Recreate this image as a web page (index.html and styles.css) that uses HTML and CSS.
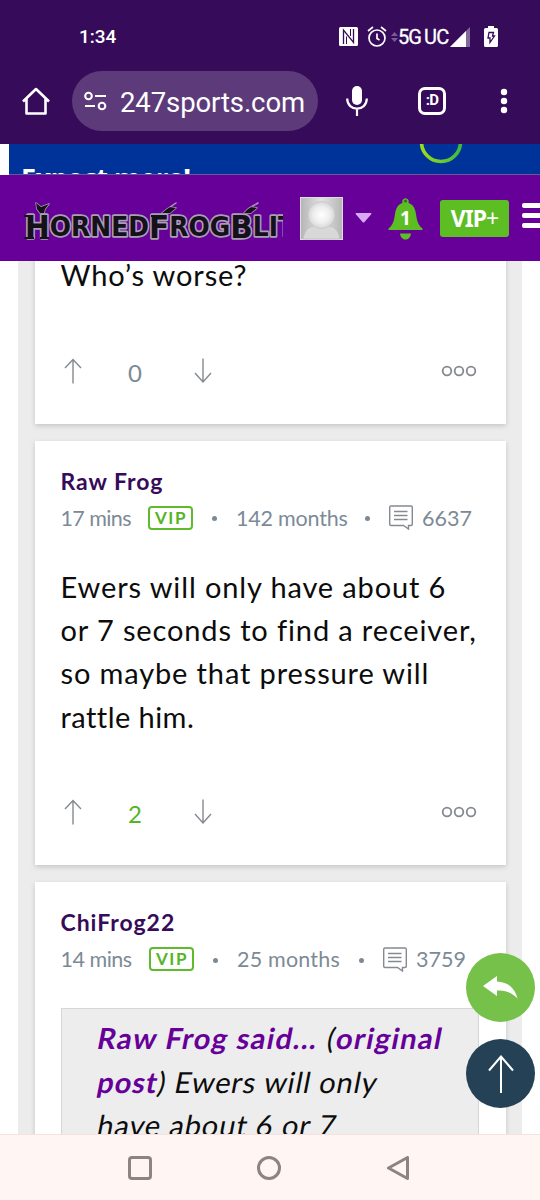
FILE: index.html
```html
<!DOCTYPE html>
<html lang="en">
<head>
    <meta charset="UTF-8">
    <meta name="viewport" content="width=device-width, initial-scale=1.0">
    <title>HornedFrogBlitz</title>

    <link rel="stylesheet" href="styles.css">
</head>
<body>
    <div class="status-bar">
        <span class="clock">1:34</span>
        <svg class="nfc" width="19" height="19" viewBox="0 0 19 19">
            <rect width="19" height="19" rx="1.500" fill="#fff"/>
            <path d="M4.500 17V3L14.500 15.500V2" fill="none" stroke="#360b59" stroke-width="1.300"/>
            <path d="M7.500 17V9.500M11.500 9V2" fill="none" stroke="#360b59" stroke-width="1"/>
        </svg>
        <svg class="alarm" width="20" height="21" viewBox="0 0 20 21" fill="none" stroke="#fff" stroke-width="1.700">
            <circle cx="10" cy="12" r="8"/>
            <path d="M10 7.500V12.500L12.500 14M1 5L6 1M19 5L14 1"/>
        </svg>
        <svg class="data" width="7" height="10" viewBox="0 0 7 10">
            <path d="M0 4L3.500 0L7 4ZM0 6L3.500 10L7 6Z" fill="#7b5b94"/>
        </svg>
        <span class="network"><span>5G</span><span>UC</span></span>
        <svg class="signal" width="20" height="20" viewBox="0 0 20 20">
            <path d="M0 20L20 0V20Z" fill="#81679a"/>
            <path d="M0 20L16 4V20Z" fill="#fff"/>
        </svg>
        <svg class="battery" width="14" height="21" viewBox="0 0 14 21">
            <path d="M1.500 2H4V0H10V2H12.500Q14 2 14 3.500V19.500Q14 21 12.500 21H1.500Q0 21 0 19.500V3.500Q0 2 1.500 2Z" fill="#fff"/>
            <path d="M5 6.500H9.500L8.500 10H10.500L6 16.500V12H4Z" fill="none" stroke="#360b59" stroke-width="1.300"/>
        </svg>
    </div>

    <div class="toolbar">
        <svg class="home" width="28" height="28" viewBox="0 0 28 28" fill="none" stroke="#fff" stroke-width="2.600" stroke-linejoin="round">
            <path d="M1 14.500L14 2L27 14.500M4.500 12V26.500H23.500V12"/>
        </svg>
        <div class="address">
            <svg width="23" height="20" viewBox="0 0 23 20" fill="none" stroke="#fff" stroke-width="2.100">
                <circle cx="4.500" cy="5" r="3.300"/>
                <path d="M11 5H22M1 15H11"/>
                <circle cx="18" cy="15" r="3.300"/>
            </svg>
            <span class="url">247sports.com</span>
        </div>
        <svg class="mic" width="22" height="31" viewBox="0 0 22 31">
            <rect x="6" y="0" width="10" height="19" rx="5" fill="#fff"/>
            <path d="M1.200 12.500C1.200 26 20.800 26 20.800 12.500M11 22.500V30" fill="none" stroke="#fff" stroke-width="2.200"/>
        </svg>
        <div class="tabs">:D</div>
        <svg class="kebab" width="8" height="26" viewBox="0 0 8 26" fill="#fff">
            <circle cx="4" cy="4" r="3.200"/>
            <circle cx="4" cy="13" r="3.200"/>
            <circle cx="4" cy="22" r="3.200"/>
        </svg>
    </div>

    <div class="ad">
        <span class="ad-text">Expect more!</span>
        <svg class="ad-ring" width="44" height="20" viewBox="0 0 44 20">
            <defs>
                <linearGradient id="ring">
                    <stop offset="0" stop-color="#9bdc1c"/>
                    <stop offset="1" stop-color="#3dbb3d"/>
                </linearGradient>
            </defs>
            <circle cx="22" cy="-2" r="19.500" fill="none" stroke="url(#ring)" stroke-width="3.600"/>
        </svg>
    </div>

    <div class="site-header">
        <svg class="logo" width="263" height="50" viewBox="0 0 263 50">
            <g fill="#15101a" stroke="#a99fb4" stroke-width="3.500" stroke-linejoin="round" paint-order="stroke">
                <path d="M16 10L21 14L29 11L25 16L24 20H20L17 16ZM156 10L150 14L156 15L150 20H142L147 16ZM238 10L231 14L237 15L231 20H224L228 16Z" stroke-width="1.500"/>
                <text x="5" y="45" font-size="32" textLength="270" lengthAdjust="spacingAndGlyphs">H<tspan font-size="27" dy="-2">ORNED</tspan><tspan dy="2">F</tspan><tspan font-size="27" dy="-2">ROG</tspan><tspan dy="2">B</tspan><tspan font-size="27" dy="-2">LIT</tspan></text>
                <path d="M4 23H11M4 45H14M20 45H29M131 23H138M214 23H221" fill="none" stroke="#15101a" stroke-width="2"/>
            </g>
        </svg>
        <svg class="avatar" width="43" height="43" viewBox="0 0 43 43">
            <defs>
                <radialGradient id="face">
                    <stop offset="0" stop-color="#fff"/>
                    <stop offset=".6" stop-color="#eee"/>
                    <stop offset="1" stop-color="#d6d6d6"/>
                </radialGradient>
                <linearGradient id="back">
                    <stop offset="0" stop-color="#b5b5b5"/>
                    <stop offset=".5" stop-color="#e2e2e2"/>
                    <stop offset="1" stop-color="#b5b5b5"/>
                </linearGradient>
            </defs>
            <rect x=".5" y=".5" width="42" height="42" fill="url(#back)" stroke="#dedede"/>
            <path d="M3 42C5 31 10 28 21.500 28S38 31 40 42Z" fill="#d8d8d8" stroke="#bbb" stroke-width=".7"/>
            <circle cx="21.500" cy="18" r="13.500" fill="url(#face)" stroke="#c4c4c4" stroke-width=".7"/>
        </svg>
        <svg class="caret" width="17" height="10" viewBox="0 0 17 10">
            <path d="M1 0H16Q17 .5 16 1.500L9.500 9Q8.500 10 7.500 9L1 1.500Q0 .5 1 0Z" fill="#d9a8f5"/>
        </svg>
        <div class="bell">
            <svg width="35" height="43" viewBox="0 0 35 43">
                <path d="M.5 33V31.500C5 28 6 24 7 17C8 10 11 7 14.500 6A3.300 3.300 0 1 1 20.500 6C24 7 27 10 28 17C29 24 30 28 34.500 31.500V33ZM12 36.500H23C22.500 40.500 20 42.500 17.500 42.500S12.500 40.500 12 36.500Z" fill="#5dbe24"/>
                <circle cx="17.500" cy="4" r="1.500" fill="#363"/>
            </svg>
            <span class="bell-count">1</span>
        </div>
        <div class="vip-button">VIP<span>+</span></div>
        <div class="menu"><i></i><i></i><i></i></div>
    </div>

    <div class="content">
        <div class="thread">
            <div class="post first">
                <p class="post-body">Who’s worse?</p>
                <div class="votes">
                    <svg width="18" height="26" viewBox="0 0 18 26"><path d="M9 25.500V1.500M1 10L9 1.500L17 10"/></svg>
                    <span class="score">0</span>
                    <svg width="18" height="26" viewBox="0 0 18 26"><path d="M9 .5V24.500M1 15L9 24L17 15"/></svg>
                    <svg class="more" width="36" height="12" viewBox="0 0 36 12"><circle cx="6" cy="6" r="4.300"/><circle cx="18" cy="6" r="4.300"/><circle cx="30" cy="6" r="4.300"/></svg>
                </div>
            </div>

            <div class="post">
                <div class="author">Raw Frog</div>
                <div class="meta">
                    <span class="mins">17 mins</span>
                    <span class="vip">VIP</span>
                    <i class="dot"></i>
                    <span class="months long">142 months</span>
                    <i class="dot"></i>
                    <svg width="24" height="25" viewBox="0 0 24 25"><path d="M2 1H22Q23.300 1 23.300 2.500V19Q23.300 20.500 22 20.500H19.500V24L14.500 20.500H2Q.7 20.500 .7 19V2.500Q.7 1 2 1ZM5 6.500H18.500M5 10.500H18.500M5 14.500H18.500"/></svg>
                    <span class="count">6637</span>
                </div>
                <p class="post-body">
                    Ewers will only have about 6<br>
                    or 7 seconds to find a receiver,<br>
                    so maybe that pressure will<br>
                    <span class="tight">rattle him.</span>
                </p>
                <div class="votes">
                    <svg width="18" height="26" viewBox="0 0 18 26"><path d="M9 25.500V1.500M1 10L9 1.500L17 10"/></svg>
                    <span class="score up">2</span>
                    <svg width="18" height="26" viewBox="0 0 18 26"><path d="M9 .5V24.500M1 15L9 24L17 15"/></svg>
                    <svg class="more" width="36" height="12" viewBox="0 0 36 12"><circle cx="6" cy="6" r="4.300"/><circle cx="18" cy="6" r="4.300"/><circle cx="30" cy="6" r="4.300"/></svg>
                </div>
            </div>

            <div class="post">
                <div class="author">ChiFrog22</div>
                <div class="meta">
                    <span class="mins late">14 mins</span>
                    <span class="vip">VIP</span>
                    <i class="dot"></i>
                    <span class="months">25 months</span>
                    <i class="dot"></i>
                    <svg width="24" height="25" viewBox="0 0 24 25"><path d="M2 1H22Q23.300 1 23.300 2.500V19Q23.300 20.500 22 20.500H19.500V24L14.500 20.500H2Q.7 20.500 .7 19V2.500Q.7 1 2 1ZM5 6.500H18.500M5 10.500H18.500M5 14.500H18.500"/></svg>
                    <span class="count">3759</span>
                </div>
                <div class="quote">
                    <div class="line source"><b>Raw Frog said...</b> (<b>original</b></div>
                    <div class="line"><b>post</b>) Ewers will only</div>
                    <div class="line">have about 6 or 7</div>
                </div>
            </div>
        </div>
    </div>

    <div class="floating">
        <div class="reply">
            <svg width="35" height="23" viewBox="0 0 35 23"><path d="M0 10L14 0V5.500C25 6 32 12 34.500 22.500C28 16 22 14.500 14 14.500V20Z" fill="#fff"/></svg>
        </div>
        <div class="top">
            <svg width="26" height="38" viewBox="0 0 26 38"><path d="M13 38V1M1 15.500L13 1.500L25 15.500" fill="none" stroke="#fff" stroke-width="2"/></svg>
        </div>
    </div>

    <div class="system-nav">
        <svg width="24" height="24" viewBox="0 0 24 24"><rect x="1.500" y="1.500" width="21" height="21" rx="2.500"/></svg>
        <svg width="24" height="24" viewBox="0 0 24 24"><circle cx="12" cy="12" r="10.500"/></svg>
        <svg width="24" height="24" viewBox="0 0 24 24"><path d="M2.500 12L21.500 1.500V22.500Z"/></svg>
    </div>
</body>
</html>
```

FILE: styles.css
```css
* {
    box-sizing: border-box;
}

body {
    margin: 0;
    width: 540px;
    height: 1200px;
    overflow: hidden;
    display: flex;
    flex-direction: column;
    background: #fff;
    font-family: Lato, sans-serif;
}

svg {
    display: block;
    flex: none;
}

p {
    margin: 0;
}

/* phone status bar */
.status-bar {
    height: 71px;
    padding: 2px 42px 0 79px;
    display: flex;
    align-items: center;
    background: #360b59;
    color: #fff;
    font: 500 19px Roboto, sans-serif;
}

.clock {
    margin-right: auto;
}

.alarm {
    margin-left: 9px;
}

.data {
    margin-left: 4px;
}

.network {
    display: flex;
    gap: 3px;
    width: 51px;
    font-size: 20px;
    font-weight: normal;
    letter-spacing: -.9px;
    -webkit-text-stroke: .3px #fff;
}

.signal {
    margin-left: 1px;
}

.battery {
    margin-left: 14px;
}

/* browser toolbar */
.toolbar {
    height: 73px;
    padding: 0 32px 13px 22px;
    display: flex;
    align-items: center;
    background: #360b59;
    color: #fff;
    font-family: Roboto, sans-serif;
}

.address {
    width: 246px;
    height: 60px;
    margin-left: 22px;
    padding-left: 12px;
    display: flex;
    align-items: center;
    gap: 13px;
    border-radius: 30px;
    background: #5d3b7a;
}

.url {
    padding-top: 2px;
    font-size: 27.5px;
    letter-spacing: -.1px;
}

.mic {
    margin-left: 28px;
}

.tabs {
    width: 28px;
    height: 28px;
    margin-left: 50px;
    border: 3px solid #fff;
    border-radius: 7px;
    font-size: 15px;
    font-weight: bold;
    line-height: 21px;
    letter-spacing: -.7px;
    text-align: center;
}

.kebab {
    margin-left: auto;
}

/* ad peeking out under the toolbar */
.ad {
    height: 31px;
    margin-left: 9px;
    padding-left: 12px;
    display: flex;
    overflow: hidden;
    background: #003399;
    border-bottom: 1px solid #66569a;
    color: #fff;
}

.ad-text {
    width: 398px;
    padding-top: 16.5px;
    font: bold 27px/34px "Open Sans", sans-serif;
    letter-spacing: -.5px;
    white-space: nowrap;
}

/* site header */
.site-header {
    height: 86px;
    padding-left: 20px;
    display: flex;
    align-items: center;
    flex: none;
    overflow: hidden;
    background: #660099;
}

.logo {
    font-family: "DejaVu Sans", sans-serif;
    font-weight: bold;
}

.avatar {
    margin-left: 17px;
}

.caret {
    margin-left: 12px;
}

.bell {
    position: relative;
    margin-left: 16px;
}

.bell-count {
    position: absolute;
    top: 10px;
    left: 0;
    width: 35px;
    text-align: center;
    font: bold 19px/22px "Noto Sans", sans-serif;
    color: #fff;
}

.vip-button {
    width: 69px;
    height: 37px;
    flex: none;
    margin-left: 17px;
    border-radius: 3px;
    background: #5dbe24;
    color: #fff;
    font: bold 23px/36px "Noto Sans", sans-serif;
    letter-spacing: -.9px;
    text-align: center;
}

.vip-button span {
    font-weight: normal;
}

.menu {
    width: 26px;
    margin-top: -6px;
    margin-left: 13px;
    display: flex;
    flex-direction: column;
    gap: 5px;
    flex: none;
}

.menu i {
    height: 5px;
    border-radius: 2px;
    background: #fff;
}

/* posts */
.content {
    height: 873px;
    flex: none;
    overflow: hidden;
    padding: 0 18px 0 17.5px;
}

.thread {
    display: flex;
    flex-direction: column;
    gap: 17px;
    padding: 0 16.5px 0 17px;
    background: #ececec;
}

.post {
    padding: 26px 26.5px 37px 26px;
    background: #fff;
    box-shadow: 0 2px 5px rgba(0, 0, 0, .16);
}

.first {
    margin-top: -34px;
}

.first .post-body {
    margin-top: 0;
}

.author {
    height: 28px;
    line-height: 29px;
    font-size: 23px;
    font-weight: bold;
    letter-spacing: .95px;
    color: #360b59;
}

.meta {
    height: 28px;
    margin-top: 9px;
    display: flex;
    align-items: center;
    font-size: 21.5px;
    line-height: 28px;
    color: #7c8a96;
    white-space: nowrap;
}

.meta svg,
.votes svg {
    fill: none;
    stroke: #858a91;
    stroke-width: 1.4;
}

.mins {
    width: 87.5px;
    letter-spacing: -.6px;
}

.late {
    width: 88.5px;
    letter-spacing: -.5px;
}

.vip {
    width: 45px;
    height: 24px;
    border: 2px solid #5fba2c;
    border-radius: 4px;
    color: #55b524;
    font-size: 17px;
    font-weight: bold;
    line-height: 20px;
    letter-spacing: 1.6px;
    text-align: center;
    text-indent: 1px;
}

.dot {
    width: 5px;
    height: 5px;
    margin: 2px 19px 0;
    border-radius: 50%;
    background: #7c8a96;
}

.months {
    width: 103px;
    letter-spacing: .2px;
}

.long {
    width: 110px;
    letter-spacing: -.2px;
}

.count {
    margin-left: 9px;
}

.post-body {
    margin-top: 33px;
    font-size: 29px;
    line-height: 43.3px;
    letter-spacing: .87px;
    color: #0c0c0c;
    white-space: nowrap;
}

.tight {
    letter-spacing: .45px;
}

.votes {
    height: 32px;
    margin-top: 58.5px;
    margin-left: 3px;
    display: flex;
    align-items: center;
}

.score {
    width: 61px;
    margin: 3px 28px 0 23px;
    text-align: center;
    font-size: 24px;
    color: #7c8a96;
}

.up {
    color: #55b524;
}

.votes .more {
    margin-left: auto;
    margin-right: 2.5px;
    stroke-width: 1.8;
}

.quote {
    width: 418px;
    height: 180px;
    margin-top: 35px;
    padding: 7px 0 0 36.5px;
    border: 1px solid #d6d6d6;
    background: #ededed;
    font-size: 29px;
    line-height: 43.3px;
    letter-spacing: .9px;
    color: #0c0c0c;
    white-space: nowrap;
}

/* slanted roman letters instead of the drawn italic */
.line {
    transform: skewX(-11deg);
}

.source {
    letter-spacing: 1.35px;
}

.quote b {
    color: #660099;
}

/* buttons floating over the thread */
.floating {
    position: fixed;
    right: 5px;
    top: 953px;
    display: flex;
    flex-direction: column;
    gap: 17px;
}

.reply,
.top {
    width: 69px;
    height: 69px;
    display: flex;
    align-items: center;
    justify-content: center;
    border-radius: 50%;
    background: #76c14a;
}

.top {
    background: #254156;
}

/* android navigation */
.system-nav {
    height: 66px;
    flex: none;
    display: flex;
    align-items: center;
    justify-content: space-between;
    padding: 0 130px 0 128px;
    background: #fff6f4;
    border-top: 1px solid #f5e2df;
}

.system-nav svg {
    fill: none;
    stroke: #8a8583;
    stroke-width: 3;
    stroke-linejoin: round;
}
```
